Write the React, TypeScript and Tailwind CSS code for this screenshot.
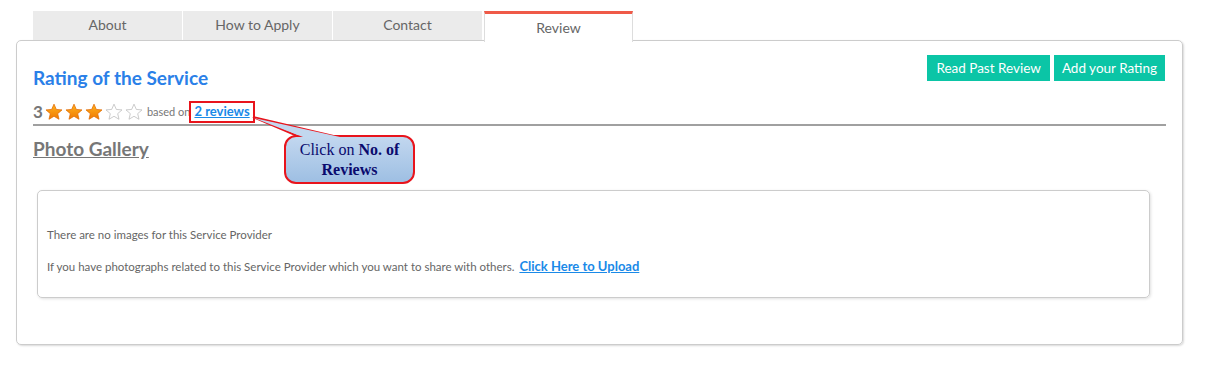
export default function App() {
  const tabs = ['About', 'How to Apply', 'Contact']
  const star = (filled: boolean, i: number) => (
    <svg key={i} width="18" height="18" viewBox="0 0 24 24" className="mr-[2px]">
      <defs>
        <linearGradient id={`g${i}`} x1="0" y1="0" x2="0" y2="1">
          <stop offset="0" stopColor="#ffb21e" />
          <stop offset="1" stopColor="#f07a00" />
        </linearGradient>
      </defs>
      <path
        d="M12 1.5l3.1 7.1 7.6.6-5.8 5 1.8 7.5L12 17.7l-6.7 4 1.8-7.5-5.8-5 7.6-.6z"
        fill={filled ? `url(#g${i})` : '#fff'}
        stroke={filled ? '#e06a00' : '#bbb'}
        strokeWidth="1"
      />
    </svg>
  )

  return (
    <div className="relative w-[1206px] h-[373px] bg-white font-['Lato','Open_Sans',sans-serif]">
      <div className="pt-[11px] pl-[16px] pr-[23px]">
        <div className="flex pl-[17px] h-[29px]">
          {tabs.map((t) => (
            <div
              key={t}
              className="w-[149px] mr-[1px] bg-[#ebebeb] flex items-center justify-center pb-[3px] text-[14px] text-[#666]"
            >
              {t}
            </div>
          ))}
          <div className="relative z-10 w-[149px] h-[31px] ml-[1px] bg-white border-t-[3px] border-[#ef5a48] border-x border-x-[#ddd] flex items-center justify-center pb-[1px] text-[14px] text-[#666]">
            Review
          </div>
        </div>

        <div className="border border-[#ccc] rounded-[5px] shadow-[1px_1px_2px_rgba(0,0,0,0.15)] h-[305px] px-[16px] pt-[14px]">
          <div className="flex justify-between items-start">
            <div className="pt-[13px] text-[19px] font-bold text-[#2a80e8] leading-none">
              Rating of the Service
            </div>
            <div className="flex gap-[4px] mr-[1px]">
              <button className="h-[26px] px-[9px] bg-[#0bc5a6] text-white text-[13.5px]">
                Read Past Review
              </button>
              <button className="h-[26px] px-[8px] bg-[#0bc5a6] text-white text-[13.5px]">
                Add your Rating
              </button>
            </div>
          </div>

          <div className="flex items-center mt-[14px] h-[22px]">
            <span className="text-[17px] font-bold text-[#777] mr-[2px]">3</span>
            {[0, 1, 2, 3, 4].map((i) => star(i < 3, i))}
            <span className="text-[11px] text-[#777] ml-[2px]">based on</span>
            <span className="-ml-[1px] border-2 border-[#e8141c] px-[3px] h-[22px] flex items-center">
              <a className="text-[13px] font-bold text-[#1a8ae8] underline">2 reviews</a>
            </span>
          </div>
          <div className="mt-[1px] h-[2px] bg-[#a0a0a0]" />

          <div className="mt-[9px] text-[19px] font-bold text-[#777] underline">Photo Gallery</div>

          <div className="mt-[26px] ml-[4px] mr-[16px] h-[108px] border border-[#ccc] rounded-[5px] shadow-[1px_1px_3px_rgba(0,0,0,0.12)] px-[9px] pt-[35px] text-[11.5px] text-[#666]">
            <div>There are no images for this Service Provider</div>
            <div className="mt-[14px]">
              If you have photographs related to this Service Provider which you want to share with others.{' '}
              <a className="ml-[2px] text-[13px] font-bold text-[#1a8ae8] underline">Click Here to Upload</a>
            </div>
          </div>
        </div>
      </div>

      <svg className="absolute left-0 top-0 pointer-events-none" width="1206" height="373">
        <polygon points="253,117 342,138 302,138" fill="#b7cfeb" stroke="#e8141c" strokeWidth="2" />
      </svg>
      <div className="absolute left-[284px] top-[135px] w-[131px] h-[49px] rounded-[12px] border-2 border-[#e8141c] bg-gradient-to-b from-[#c2d7ef] to-[#9ebfe3] flex items-center justify-center text-center leading-[20px] text-[16px] text-[#0a0a6e] font-['Liberation_Serif',serif]">
        <div>
          Click on <b>No. of</b>
          <br />
          <b>Reviews</b>
        </div>
      </div>
      <svg className="absolute left-0 top-0 pointer-events-none" width="1206" height="373">
        <polygon points="254,118 340,137 303,137" fill="#c2d7ef" />
      </svg>
    </div>
  )
}
